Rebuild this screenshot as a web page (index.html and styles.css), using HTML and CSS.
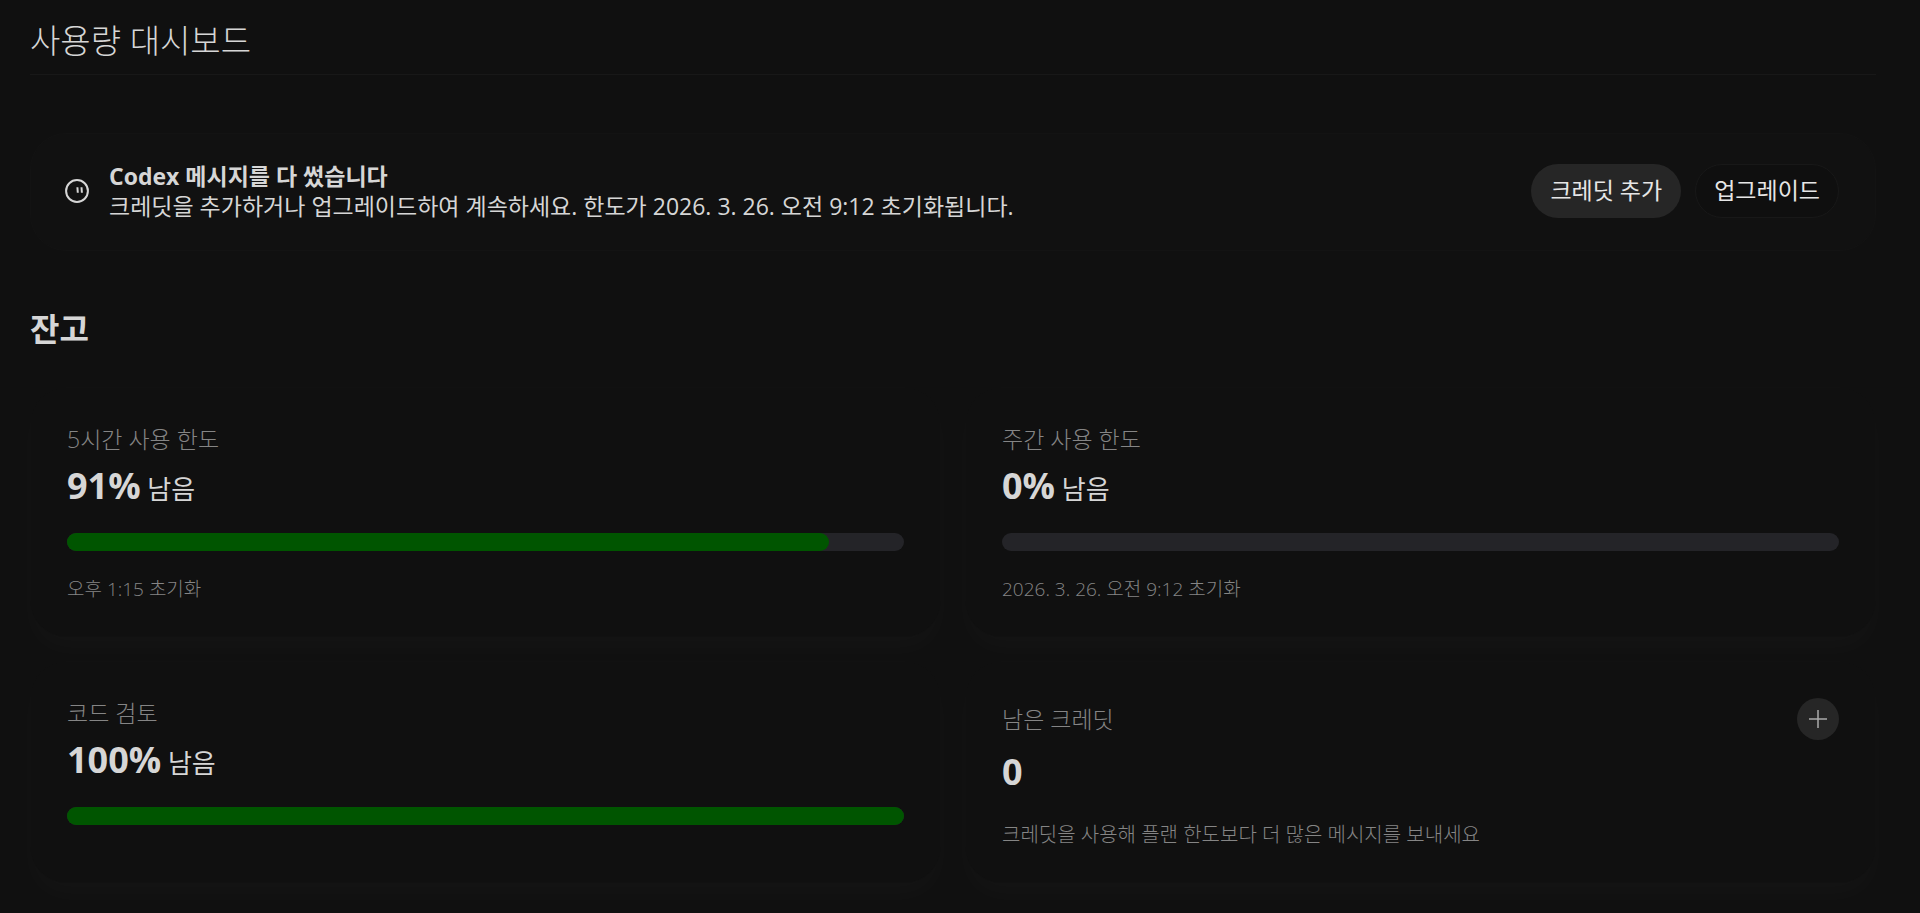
FILE: index.html
```html
<!DOCTYPE html>
<html lang="ko">
<head>
    <meta charset="utf-8">
    <title>사용량 대시보드</title>
    <link rel="stylesheet" href="styles.css">
</head>
<body>
    <header>
        <h1>사용량 대시보드</h1>
    </header>

    <main>
        <!-- 한도 알림 -->
        <section class="notice">
            <svg class="notice-icon" viewBox="0 0 24 24" aria-hidden="true">
                <circle cx="12" cy="12" r="10.9"/>
                <path d="M12.4 8.3l.4 5.4M16.5 8.3l.4 5.4"/>
            </svg>
            <div class="notice-text">
                <strong>Codex 메시지를 다 썼습니다</strong>
                <p>크레딧을 추가하거나 업그레이드하여 계속하세요. 한도가 2026. 3. 26. 오전 9:12 초기화됩니다.</p>
            </div>
            <div class="notice-actions">
                <button class="btn btn-filled">크레딧 추가</button>
                <button class="btn btn-outline">업그레이드</button>
            </div>
        </section>

        <h2>잔고</h2>

        <!-- 잔고 카드 -->
        <div class="cards">
            <section class="card">
                <h3>5시간 사용 한도</h3>
                <p class="amount"><b>91%</b> 남음</p>
                <div class="bar"><div class="bar-fill" style="width: 91%"></div></div>
                <p class="note">오후 1:15 초기화</p>
            </section>
            <section class="card">
                <h3>주간 사용 한도</h3>
                <p class="amount"><b>0%</b> 남음</p>
                <div class="bar"><div class="bar-fill" style="width: 0%"></div></div>
                <p class="note">2026. 3. 26. 오전 9:12 초기화</p>
            </section>
            <section class="card">
                <h3>코드 검토</h3>
                <p class="amount"><b>100%</b> 남음</p>
                <div class="bar"><div class="bar-fill" style="width: 100%"></div></div>
            </section>
            <section class="card">
                <div class="card-head">
                    <h3>남은 크레딧</h3>
                    <button class="btn-add" aria-label="크레딧 추가">
                        <svg viewBox="0 0 18 18" aria-hidden="true"><path d="M9 0v18M0 9h18"/></svg>
                    </button>
                </div>
                <p class="amount"><b>0</b></p>
                <p class="note note-help">크레딧을 사용해 플랜 한도보다 더 많은 메시지를 보내세요</p>
            </section>
        </div>
    </main>
</body>
</html>
```
FILE: styles.css
```css
* {
    box-sizing: border-box;
}
body {
    margin: 0;
    padding: 0 44px 24px 30px;
    background: #101010;
    color: #d6d6d6;
    font-family: "Open Sans", "Noto Sans CJK KR", sans-serif;
    font-size: 23px;
    line-height: 30px;
}
h1, h2, h3, p {
    margin: 0;
}
header {
    padding: 21px 0 13px;
    border-bottom: 1px solid #181818;
}
h1 {
    font-size: 33px;
    line-height: 40px;
    font-weight: 300;
}

/* 알림 */
.notice {
    display: flex;
    align-items: center;
    margin-top: 58px;
    padding: 27px 36px 29px 34px;
    border: 1px solid #131313;
    border-radius: 36px;
    background: #111111;
}
.notice-icon {
    width: 24px;
    height: 24px;
    margin-right: 20px;
    fill: none;
    stroke: #d6d6d6;
    stroke-width: 2;
}
.notice-text {
    flex: 1;
}
.notice-text strong {
    display: block;
}
.notice-actions {
    display: flex;
    gap: 14px;
}
.btn {
    height: 54px;
    padding: 0 18px 2px;
    border: 1px solid transparent;
    border-radius: 27px;
    color: #e6e6e6;
    font: inherit;
    cursor: pointer;
}
.btn-filled {
    background: #262626;
}
.btn-outline {
    background: #0f0f0f;
    border-color: #181818;
}

h2 {
    margin: 58px 0 38px;
    font-size: 32px;
    line-height: 40px;
}

/* 카드 */
.cards {
    display: grid;
    grid-template-columns: 1fr 1fr;
    gap: 24px;
}
.card {
    padding: 36px 36px 33px;
    border: 1px solid #111111;
    border-radius: 36px;
    background: #101010;
    box-shadow: 0 14px 24px rgba(255, 255, 255, 0.02);
}
.card h3 {
    color: #858585;
    font-size: 23px;
    font-weight: 300;
}
.card-head {
    display: flex;
    align-items: center;
    justify-content: space-between;
}
.amount {
    margin: 10px 0 22px;
    font-size: 26px;
    line-height: 44px;
}
.amount b {
    font-size: 36px;
}
.bar {
    height: 18px;
    border-radius: 9px;
    background: #242428;
}
.bar-fill {
    height: 100%;
    border-radius: 9px;
    background: #005500;
}
.note {
    margin-top: 24px;
    color: #858585;
    font-size: 19px;
    font-weight: 300;
    line-height: 28px;
}
.note-help {
    font-size: 20px;
}
.btn-add {
    display: flex;
    align-items: center;
    justify-content: center;
    width: 42px;
    height: 42px;
    padding: 0;
    border: 0;
    border-radius: 50%;
    background: #262626;
    cursor: pointer;
}
.btn-add svg {
    width: 18px;
    height: 18px;
    stroke: #aaaaaa;
    stroke-width: 1.5;
}
```
